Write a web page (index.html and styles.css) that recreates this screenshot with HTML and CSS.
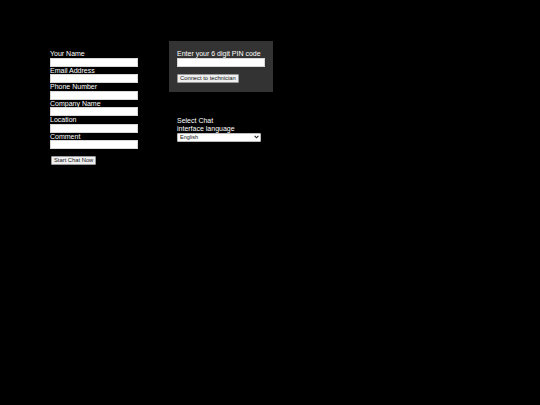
FILE: index.html
```html
<!DOCTYPE html>
<html lang="en">
<head>
<meta charset="utf-8">
<title>Support Chat</title>
<link rel="stylesheet" href="styles.css">
</head>
<body>
<div class="page">
  <form class="left">
    <label class="label" for="name">Your Name</label>
    <input class="field" id="name" type="text">
    <label class="label" for="email">Email Address</label>
    <input class="field" id="email" type="text">
    <label class="label" for="phone">Phone Number</label>
    <input class="field" id="phone" type="text">
    <label class="label" for="company">Company Name</label>
    <input class="field" id="company" type="text">
    <label class="label" for="location">Location</label>
    <input class="field" id="location" type="text">
    <label class="label" for="comment">Comment</label>
    <input class="field" id="comment" type="text">
    <button class="btn btn-start" type="button">Start Chat Now</button>
  </form>
  <div class="right">
    <div class="pinbox">
      <label class="label" for="pin">Enter your 6 digit PIN code</label>
      <input class="field" id="pin" type="text">
      <button class="btn btn-connect" type="button">Connect to technician</button>
    </div>
    <div class="lang">
      <label class="label" for="language">Select Chat<br>interface language</label>
      <div class="select-wrap">
        <select class="select" id="language">
          <option>English</option>
        </select>
        <svg class="chev" viewBox="0 0 5 4" width="5" height="4"><path d="M0.6 0.8L2.5 2.8L4.4 0.8" fill="none" stroke="#222" stroke-width="1.1"/></svg>
      </div>
    </div>
  </div>
</div>
</body>
</html>
```

FILE: styles.css
```css
html, body {
  margin: 0;
  padding: 0;
  background: #000;
}
body {
  font-family: "Liberation Sans", Arial, sans-serif;
  color: #fff;
  height: 405px;
}
.page {
  display: flex;
  align-items: flex-start;
  padding: 41px 0 0 50px;
  gap: 31px;
}
.left {
  width: 88px;
  margin: 0;
  padding-top: 9px;
  display: flex;
  flex-direction: column;
  align-items: flex-start;
}
.label {
  display: block;
  font-size: 7px;
  line-height: 7.5px;
  color: #fff;
}
.field {
  display: block;
  width: 88px;
  height: 9px;
  box-sizing: border-box;
  margin: 0;
  padding: 0;
  border: 1px solid #d8d8d8;
  background: #fff;
  font-size: 6px;
}
.btn {
  display: block;
  height: 9px;
  box-sizing: border-box;
  margin: 0;
  padding: 0 2px;
  white-space: nowrap;
  font-family: "Liberation Sans", Arial, sans-serif;
  font-size: 5.8px;
  line-height: 7px;
  color: #111;
  background: #efefef;
  border: 1px solid #9a9a9a;
  border-radius: 1px;
}
.btn-start {
  margin-top: 7px;
  margin-left: 1px;
}
.right {
  width: 104px;
}
.pinbox {
  background: #333;
  padding: 9px 8px 9px;
}
.pinbox .field {
  margin-top: 0.5px;
}
.btn-connect {
  margin-top: 7px;
}
.lang {
  margin-top: 25px;
  padding-left: 8px;
}
.select-wrap {
  position: relative;
  width: 84px;
  height: 9px;
  margin-top: 0.5px;
}
.select {
  -webkit-appearance: none;
  appearance: none;
  display: block;
  width: 84px;
  height: 9px;
  box-sizing: border-box;
  margin: 0;
  padding: 0 2px;
  border: 1px solid #bbb;
  border-radius: 1px;
  background: #fff;
  color: #111;
  font-family: "Liberation Sans", Arial, sans-serif;
  font-size: 5.5px;
  line-height: 7px;
}
.chev {
  position: absolute;
  right: 2px;
  top: 2.5px;
}
```
